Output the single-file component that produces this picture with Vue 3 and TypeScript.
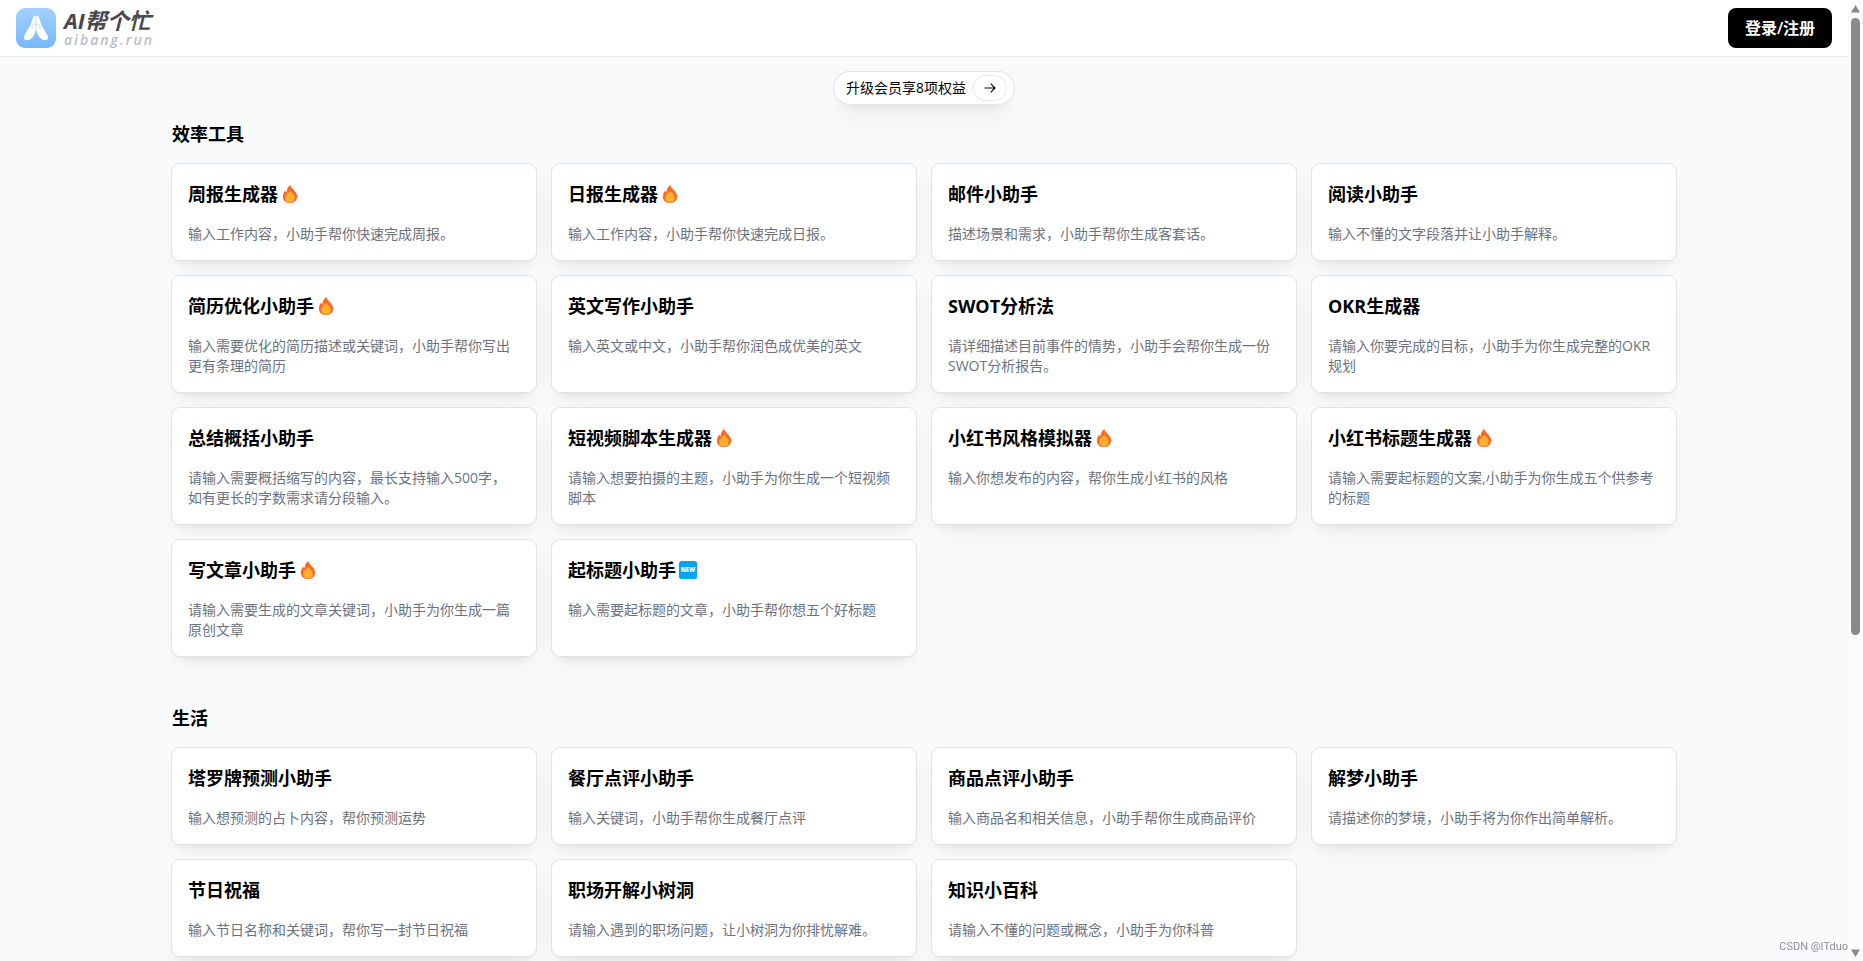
<script setup lang="ts">
type Badge = 'hot' | 'new'

interface Tool {
  title: string
  desc: string
  badge?: Badge
}

interface Section {
  title: string
  tools: Tool[]
}

const sections: Section[] = [
  {
    title: '效率工具',
    tools: [
      { title: '周报生成器', desc: '输入工作内容，小助手帮你快速完成周报。', badge: 'hot' },
      { title: '日报生成器', desc: '输入工作内容，小助手帮你快速完成日报。', badge: 'hot' },
      { title: '邮件小助手', desc: '描述场景和需求，小助手帮你生成客套话。' },
      { title: '阅读小助手', desc: '输入不懂的文字段落并让小助手解释。' },
      { title: '简历优化小助手', desc: '输入需要优化的简历描述或关键词，小助手帮你写出更有条理的简历', badge: 'hot' },
      { title: '英文写作小助手', desc: '输入英文或中文，小助手帮你润色成优美的英文' },
      { title: 'SWOT分析法', desc: '请详细描述目前事件的情势，小助手会帮你生成一份SWOT分析报告。' },
      { title: 'OKR生成器', desc: '请输入你要完成的目标，小助手为你生成完整的OKR规划' },
      { title: '总结概括小助手', desc: '请输入需要概括缩写的内容，最长支持输入500字，如有更长的字数需求请分段输入。' },
      { title: '短视频脚本生成器', desc: '请输入想要拍摄的主题，小助手为你生成一个短视频脚本', badge: 'hot' },
      { title: '小红书风格模拟器', desc: '输入你想发布的内容，帮你生成小红书的风格', badge: 'hot' },
      { title: '小红书标题生成器', desc: '请输入需要起标题的文案,小助手为你生成五个供参考的标题', badge: 'hot' },
      { title: '写文章小助手', desc: '请输入需要生成的文章关键词，小助手为你生成一篇原创文章', badge: 'hot' },
      { title: '起标题小助手', desc: '输入需要起标题的文章，小助手帮你想五个好标题', badge: 'new' },
    ],
  },
  {
    title: '生活',
    tools: [
      { title: '塔罗牌预测小助手', desc: '输入想预测的占卜内容，帮你预测运势' },
      { title: '餐厅点评小助手', desc: '输入关键词，小助手帮你生成餐厅点评' },
      { title: '商品点评小助手', desc: '输入商品名和相关信息，小助手帮你生成商品评价' },
      { title: '解梦小助手', desc: '请描述你的梦境，小助手将为你作出简单解析。' },
      { title: '节日祝福', desc: '输入节日名称和关键词，帮你写一封节日祝福' },
      { title: '职场开解小树洞', desc: '请输入遇到的职场问题，让小树洞为你排忧解难。' },
      { title: '知识小百科', desc: '请输入不懂的问题或概念，小助手为你科普' },
    ],
  },
]
</script>

<template>
  <div class="shell">
    <div class="page">
      <header class="topbar">
        <a class="brand" href="#">
          <svg class="brand-icon" viewBox="0 0 40 40" aria-hidden="true">
            <defs>
              <linearGradient id="brandFill" x1="0" y1="0" x2="0" y2="1">
                <stop offset="0" stop-color="#a5d0fb" />
                <stop offset="1" stop-color="#74b9fd" />
              </linearGradient>
            </defs>
            <rect width="40" height="40" rx="9" fill="url(#brandFill)" />
            <path
              d="M19.700 7.800c-1.200-.5-2.200.2-2.600 1.500L14.600 17 8.400 27.500c-1.300 2.400-.1 4.600 2.200 4.700 2.900.1 5.100-1.500 6.800-4.200 1.300-2.100 2.300-4.400 2.300-6.500z"
              fill="#fff"
            />
            <path
              d="M20.300 7.800c1.200-.5 2.200.2 2.600 1.500L25.400 17l6.200 10.500c1.300 2.400.1 4.600-2.200 4.700-2.900.1-5.100-1.500-6.800-4.200-1.300-2.100-2.300-4.400-2.300-6.500z"
              fill="#fff"
            />
            <path
              d="M16 21v-2.500c0-1.500 1.600-2.300 4-2.300s4 .8 4 2.300V21"
              fill="none"
              stroke="#b5d8fb"
              stroke-width=".8"
            />
          </svg>
          <span class="brand-text">
            <span class="brand-name">AI帮个忙</span>
            <span class="brand-domain">aibang.run</span>
          </span>
        </a>
        <button class="login" type="button">登录/注册</button>
      </header>

      <main class="content">
        <a class="upgrade" href="#">
          <span>升级会员享8项权益</span>
          <span class="upgrade-arrow">
            <svg viewBox="0 0 12 12" width="12" height="12" aria-hidden="true">
              <path d="M.5 6h10.500M6.700 1.700 11 6l-4.300 4.300" fill="none" stroke="#000" stroke-width="1.1" />
            </svg>
          </span>
        </a>

        <section v-for="section in sections" :key="section.title" class="section">
          <h2 class="section-title">{{ section.title }}</h2>
          <div class="grid">
            <a v-for="tool in section.tools" :key="tool.title" class="card" href="#">
              <h3 class="card-title">
                <span>{{ tool.title }}</span>
                <svg v-if="tool.badge === 'hot'" class="badge" viewBox="0 0 24 24" aria-label="热门">
                  <path
                    d="M12.400 0c.6 3 2.600 4.600 4.500 6.600C19.300 9.200 21.500 11.500 21.500 15.500 21.500 20.500 17.500 24 12 24s-9.500-3.500-9.500-8.500c0-3.500 1.500-6.300 3.300-8.200.3 1.200.7 2 1.500 2.700C7.600 5.500 9.500 2 12.400 0z"
                    fill="#ff6723"
                  />
                  <path
                    d="M12.500 7.500c.8 1.700 2 2.700 3.300 4.300 1.200 1.500 2.400 3 2.400 5.400 0 3.600-2.600 6.300-6.200 6.300s-6.400-2.700-6.400-6.200c0-2.200 1-3.800 2.300-5.400 1.600-1.700 3.500-2.600 4.600-4.400z"
                    fill="#ffb02e"
                  />
                </svg>
                <svg v-else-if="tool.badge === 'new'" class="badge" viewBox="0 0 18 18" aria-label="NEW">
                  <rect width="18" height="18" rx="2.500" fill="#00a6ed" />
                  <text class="badge-text" x="9" y="11" text-anchor="middle">NEW</text>
                </svg>
              </h3>
              <p class="card-desc">{{ tool.desc }}</p>
            </a>
          </div>
        </section>
      </main>
    </div>

    <div class="scrollbar" aria-hidden="true">
      <svg class="arrow" viewBox="0 0 9 8"><path d="M4.500 0 9 7.500H0z" fill="#8a8a8a" /></svg>
      <div class="track"><div class="thumb"></div></div>
      <svg class="arrow" viewBox="0 0 9 8"><path d="M4.500 8 9 .5H0z" fill="#8a8a8a" /></svg>
    </div>
    <span class="watermark">CSDN @ITduo</span>
  </div>
</template>

<style>
body {
  margin: 0;
}
</style>

<style scoped>
.shell {
  display: grid;
  grid-template-columns: minmax(0, 1fr) 15px;
  height: 100vh;
  color: #000;
  background: #f9fafc;
  font-family: "Open Sans", "Noto Sans CJK SC", sans-serif;
  font-size: 14px;
  line-height: 20px;
}

a {
  color: inherit;
  text-decoration: none;
}

.page {
  overflow-y: auto;
  scrollbar-width: none;
}

.topbar {
  display: flex;
  align-items: center;
  justify-content: space-between;
  height: 56px;
  padding: 0 16px;
  background: #fff;
  box-shadow: 0 1px 0 #e5e7eb;
}

.brand {
  display: flex;
  align-items: center;
  gap: 8px;
}

.brand-icon {
  width: 40px;
  height: 40px;
}

.brand-text {
  display: flex;
  flex-direction: column;
  font-style: italic;
}

.brand-name {
  color: #46484d;
  font-size: 22px;
  font-weight: 700;
  line-height: 24px;
}

.brand-domain {
  color: #b9bdca;
  font-size: 14px;
  font-weight: 600;
  line-height: 16px;
  letter-spacing: 2px;
}

.login {
  min-width: 104px;
  height: 40px;
  padding: 0 16px;
  border: 0;
  border-radius: 8px;
  color: #fff;
  background: #000;
  font-family: inherit;
  font-size: 16px;
  font-weight: 600;
  line-height: 24px;
}

.content {
  display: flex;
  flex-direction: column;
  max-width: 1504px;
  margin: 0 auto;
  padding: 16px 16px 48px;
}

.upgrade {
  display: flex;
  align-items: center;
  align-self: center;
  gap: 8px;
  height: 32px;
  padding: 0 8px 0 12px;
  border-radius: 16px;
  background: #fff;
  box-shadow:
    0 0 0 1px #e1e5ea,
    0 20px 25px -5px rgba(0, 0, 0, 0.05),
    0 8px 10px -6px rgba(0, 0, 0, 0.08);
}

.upgrade-arrow {
  display: flex;
  align-items: center;
  justify-content: center;
  width: 32px;
  height: 24px;
  border-radius: 12px;
  box-shadow: 0 0 0 1px #e8eaed;
}

.section {
  margin-bottom: 48px;
}

.upgrade + .section {
  margin-top: 16px;
}

.section-title {
  margin: 0 0 16px;
  font-size: 18px;
  font-weight: 700;
  line-height: 28px;
}

.grid {
  display: grid;
  grid-template-columns: repeat(4, minmax(0, 1fr));
  gap: 16px;
}

.card {
  padding: 16px;
  border-radius: 8px;
  background: #fff;
  box-shadow:
    0 0 0 1px #dfe3e8,
    0 10px 30px -5px rgba(0, 0, 0, 0.06),
    0 8px 10px -6px rgba(0, 0, 0, 0.09);
}

.card-title {
  display: flex;
  align-items: center;
  gap: 3px;
  margin: 0 0 16px;
  font-size: 18px;
  font-weight: 700;
  line-height: 28px;
}

.badge {
  width: 18px;
  height: 18px;
}

.badge-text {
  fill: #fff;
  font-family: "Open Sans", sans-serif;
  font-size: 6px;
  font-weight: 800;
}

.card-desc {
  margin: 0;
  padding-right: 4px;
  color: #6b7280;
}

.scrollbar {
  display: flex;
  flex-direction: column;
  align-items: center;
  gap: 5px;
  padding: 5px 0 4px;
  background: #fcfcfc;
}

.arrow {
  width: 9px;
  height: 8px;
}

.track {
  flex: 1;
  width: 9px;
}

.thumb {
  height: calc(100% * 2 / 3);
  border-radius: 5px;
  background: #8a8a8a;
}

.watermark {
  position: fixed;
  right: 15px;
  bottom: 4px;
  color: #8f9196;
  font-family: Roboto, sans-serif;
  font-size: 11px;
}
</style>
